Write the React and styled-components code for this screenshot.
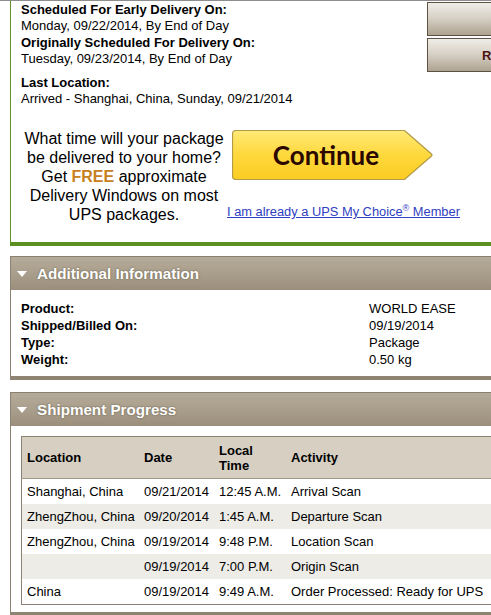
import React from "react";
import styled, { createGlobalStyle } from "styled-components";

const GlobalStyle = createGlobalStyle`
  html, body {
    margin: 0;
    padding: 0;
    overflow: hidden;
    background: #fff;
  }
  body {
    font-family: "Liberation Sans", Arial, sans-serif;
    font-size: 13px;
    color: #000;
  }
`;

const Page = styled.div`
  width: 560px;
`;

const TopWrap = styled.div`
  border-top: 1px solid #8e8e8e;
  padding-left: 10px;
`;

const StatusBox = styled.div`
  border-left: 1px solid #5f9424;
  border-bottom: 4px solid #5b8f20;
  padding-bottom: 18px;
`;

const InfoRow = styled.div`
  display: flex;
  align-items: flex-start;
`;

const Info = styled.div`
  width: 406px;
  flex: none;
  padding: 1px 0 0 10px;
  line-height: 16px;
`;

const Group = styled.div`
  margin-top: ${(p) => p.$gap || 0}px;
`;

const Label = styled.div`
  font-weight: bold;
`;

const SideButtons = styled.div`
  flex: 1;
  display: flex;
  flex-direction: column;
  gap: 2px;
  margin-top: 1px;
`;

const GreyButton = styled.button`
  height: 34px;
  width: 100%;
  box-sizing: border-box;
  border: 1px solid #5d5141;
  background: linear-gradient(#efede8 0%, #d8d2c7 45%, #aea391 100%);
  font-family: "Liberation Sans", Arial, sans-serif;
  font-size: 13px;
  font-weight: bold;
  color: #4a1410;
  text-align: left;
  padding: 0 0 0 54px;
`;

const Promo = styled.div`
  display: flex;
  align-items: flex-start;
  margin-top: 22px;
  padding-left: 10px;
`;

const PromoText = styled.div`
  width: 206px;
  flex: none;
  text-align: center;
  font-size: 16px;
  line-height: 19px;
`;

const Free = styled.span`
  color: #c8801c;
  font-weight: bold;
`;

const ActionCol = styled.div`
  display: flex;
  flex-direction: column;
  align-items: flex-start;
`;

const ContinueButton = styled.button`
  position: relative;
  width: 201px;
  height: 50px;
  margin: 1px 0 0 5px;
  padding: 0 13px 0 0;
  border: none;
  background: none;
  cursor: pointer;
`;

const ButtonShape = styled.svg`
  position: absolute;
  inset: 0;
`;

const ButtonLabel = styled.span`
  position: relative;
  font-family: Lato, "Open Sans", sans-serif;
  font-weight: bold;
  font-size: 26px;
  color: #2a0800;
`;

const ChoiceLink = styled.a`
  margin-top: 24px;
  line-height: 16px;
  color: #3040c0;
  text-decoration: underline;
  font-size: 12.85px;

  sup {
    font-size: 9px;
    line-height: 0;
  }
`;

const Panel = styled.div`
  margin: ${(p) => p.$top}px 0 0 10px;
  border-left: 1px solid #8c8273;
  border-bottom: 4px solid #8f8474;
`;

const PanelHeader = styled.div`
  height: 33px;
  border-top: 1px solid #8a7f6e;
  background: linear-gradient(#b5ab99 0%, #a89d8a 55%, #9b8f7c 100%);
  display: flex;
  align-items: center;
  padding-left: 6px;
  color: #fff;
  font-weight: bold;
  font-size: 15.2px;
  text-shadow: 0 0 2px rgba(70, 58, 40, 0.7);
`;

const Caret = styled.span`
  width: 0;
  height: 0;
  border-left: 5px solid transparent;
  border-right: 5px solid transparent;
  border-top: 6px solid #fff;
  margin-right: 10px;
`;

const DetailBody = styled.div`
  padding: 10px 10px 8px;
  display: grid;
  grid-template-columns: 348px auto;
  line-height: 17px;
`;

const ProgressBody = styled.div`
  padding: 10px 10px 7px;
`;

const Table = styled.table`
  width: 520px;
  border-collapse: collapse;
  border: 1px solid #8c8273;
  font-size: 13px;
`;

const HeadCell = styled.th`
  height: 41px;
  text-align: left;
  vertical-align: middle;
  padding: 0 0 0 5px;
  line-height: 15px;
  background: #d6cfc2;
  border-bottom: 1px solid #a39885;
  width: ${(p) => (p.$w ? `${p.$w}px` : "auto")};
`;

const Row = styled.tr`
  background: ${(p) => (p.$alt ? "#edece7" : "#fff")};
`;

const Cell = styled.td`
  height: 25px;
  padding: 0 0 0 5px;
  vertical-align: middle;
  white-space: nowrap;
`;

const details = [
  ["Product:", "WORLD EASE"],
  ["Shipped/Billed On:", "09/19/2014"],
  ["Type:", "Package"],
  ["Weight:", "0.50 kg"],
];

const progress = [
  ["Shanghai, China", "09/21/2014", "12:45 A.M.", "Arrival Scan"],
  ["ZhengZhou, China", "09/20/2014", "1:45 A.M.", "Departure Scan"],
  ["ZhengZhou, China", "09/19/2014", "9:48 P.M.", "Location Scan"],
  ["", "09/19/2014", "7:00 P.M.", "Origin Scan"],
  ["China", "09/19/2014", "9:49 A.M.", "Order Processed: Ready for UPS"],
];

const App = () => {
  return (
    <Page>
      <GlobalStyle />
      <TopWrap>
        <StatusBox>
          <InfoRow>
            <Info>
              <Group>
                <Label>Scheduled For Early Delivery On:</Label>
                <div>Monday, 09/22/2014, By End of Day</div>
              </Group>
              <Group $gap={1}>
                <Label>Originally Scheduled For Delivery On:</Label>
                <div>Tuesday, 09/23/2014, By End of Day</div>
              </Group>
              <Group $gap={8}>
                <Label>Last Location:</Label>
                <div>Arrived - Shanghai, China, Sunday, 09/21/2014</div>
              </Group>
            </Info>
            <SideButtons>
              <GreyButton></GreyButton>
              <GreyButton>Reschedule</GreyButton>
            </SideButtons>
          </InfoRow>
          <Promo>
            <PromoText>
              What time will your package be delivered to your home? Get{" "}
              <Free>FREE</Free> approximate Delivery Windows on most UPS
              packages.
            </PromoText>
            <ActionCol>
              <ContinueButton>
                <ButtonShape width="201" height="50" viewBox="0 0 201 50">
                  <defs>
                    <linearGradient id="gold" x1="0" y1="0" x2="0" y2="1">
                      <stop offset="0" stopColor="#ffe977" />
                      <stop offset="0.5" stopColor="#fed83c" />
                      <stop offset="1" stopColor="#fbcc22" />
                    </linearGradient>
                  </defs>
                  <path
                    d="M4 0.5 H172.5 L199.5 24 Q200.5 25 199.5 26 L172.5 49.5 H4 Q0.5 49.5 0.5 46 V4 Q0.5 0.5 4 0.5 Z"
                    fill="url(#gold)"
                    stroke="#b19a48"
                    strokeWidth="1.2"
                  />
                </ButtonShape>
                <ButtonLabel>Continue</ButtonLabel>
              </ContinueButton>
              <ChoiceLink href="#">
                I am already a UPS My Choice<sup>®</sup> Member
              </ChoiceLink>
            </ActionCol>
          </Promo>
        </StatusBox>
      </TopWrap>

      <Panel $top={10}>
        <PanelHeader>
          <Caret />
          Additional Information
        </PanelHeader>
        <DetailBody>
          {details.map(([k, v]) => (
            <React.Fragment key={k}>
              <Label>{k}</Label>
              <div>{v}</div>
            </React.Fragment>
          ))}
        </DetailBody>
      </Panel>

      <Panel $top={12}>
        <PanelHeader>
          <Caret />
          Shipment Progress
        </PanelHeader>
        <ProgressBody>
          <Table>
            <thead>
              <tr>
                <HeadCell $w={112}>Location</HeadCell>
                <HeadCell $w={70}>Date</HeadCell>
                <HeadCell $w={67}>
                  Local
                  <br />
                  Time
                </HeadCell>
                <HeadCell>Activity</HeadCell>
              </tr>
            </thead>
            <tbody>
              {progress.map((r, i) => (
                <Row key={i} $alt={i % 2 === 1}>
                  {r.map((c, j) => (
                    <Cell key={j}>{c}</Cell>
                  ))}
                </Row>
              ))}
            </tbody>
          </Table>
        </ProgressBody>
      </Panel>
    </Page>
  );
};

export default App;
